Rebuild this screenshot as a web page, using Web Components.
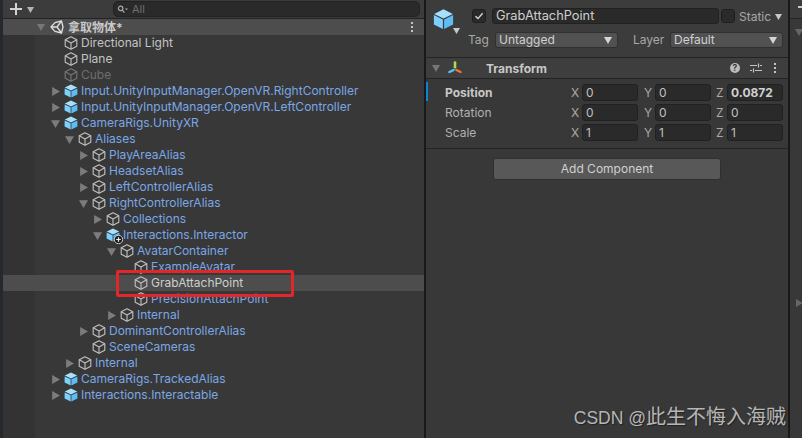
<!DOCTYPE html>
<html>
<head>
<meta charset="utf-8">
<style>
  html, body { margin: 0; height: 100%; background: #383838; overflow: hidden; }
</style>
</head>
<body>
<unity-editor>
  <hierarchy-panel slot="left">
    <scene-row>拿取物体*</scene-row>
    <tree-row depth="0" icon="go">Directional Light</tree-row>
    <tree-row depth="0" icon="go">Plane</tree-row>
    <tree-row depth="0" icon="go" tone="off">Cube</tree-row>
    <tree-row depth="0" icon="prefab" arrow="right" tone="link">Input.UnityInputManager.OpenVR.RightController</tree-row>
    <tree-row depth="0" icon="prefab" arrow="right" tone="link">Input.UnityInputManager.OpenVR.LeftController</tree-row>
    <tree-row depth="0" icon="prefab" arrow="down" tone="link">CameraRigs.UnityXR</tree-row>
    <tree-row depth="1" icon="go" arrow="down" tone="link">Aliases</tree-row>
    <tree-row depth="2" icon="go" arrow="right" tone="link">PlayAreaAlias</tree-row>
    <tree-row depth="2" icon="go" arrow="right" tone="link">HeadsetAlias</tree-row>
    <tree-row depth="2" icon="go" arrow="right" tone="link">LeftControllerAlias</tree-row>
    <tree-row depth="2" icon="go" arrow="down" tone="link">RightControllerAlias</tree-row>
    <tree-row depth="3" icon="go" arrow="right" tone="link">Collections</tree-row>
    <tree-row depth="3" icon="prefab-add" arrow="down" tone="link">Interactions.Interactor</tree-row>
    <tree-row depth="4" icon="go" arrow="down" tone="link">AvatarContainer</tree-row>
    <tree-row depth="5" icon="go" tone="link">ExampleAvatar</tree-row>
    <tree-row depth="5" icon="go" selected>GrabAttachPoint</tree-row>
    <tree-row depth="5" icon="go" tone="link">PrecisionAttachPoint</tree-row>
    <tree-row depth="4" icon="go" arrow="right" tone="link">Internal</tree-row>
    <tree-row depth="2" icon="go" arrow="right" tone="link">DominantControllerAlias</tree-row>
    <tree-row depth="2" icon="go" tone="link">SceneCameras</tree-row>
    <tree-row depth="1" icon="go" arrow="right" tone="link">Internal</tree-row>
    <tree-row depth="0" icon="prefab" arrow="right" tone="link">CameraRigs.TrackedAlias</tree-row>
    <tree-row depth="0" icon="prefab" arrow="right" tone="link">Interactions.Interactable</tree-row>
  </hierarchy-panel>
  <inspector-panel slot="right"></inspector-panel>
</unity-editor>

<script>
const FONT = '"Inter", "Noto Sans CJK SC", sans-serif';

const CUBE = `<path d="M7 .5 13.2 3.6 7 6.6 .8 3.6Z" fill="#a5e0fd"/><path d="M.6 4.4 6.6 7.3V13.6L.6 10.6Z" fill="#7cd0fd"/><path d="M13.4 4.4 7.4 7.3V13.6L13.4 10.6Z" fill="#5fbcf2"/>`;

const ICONS = {
  go: `<svg width="14" height="14" viewBox="0 0 14 14" fill="none" stroke="#c2c2c2" stroke-width="1.1" stroke-linejoin="round"><path d="M7 .8 12.8 3.8V10.2L7 13.2 1.2 10.2V3.8Z"/><path d="M1.2 3.8 7 6.9 12.8 3.8M7 6.9V13.2"/></svg>`,
  prefab: `<svg width="14" height="14" viewBox="0 0 14 14">${CUBE}</svg>`,
  logo: `<svg width="14" height="14" viewBox="0 0 14 14" fill="none" stroke="#e0e0e0" stroke-width="1.3" stroke-linejoin="round"><path d="M1 7 5 2.6 11.5 1 13 7 11.5 13 5 11.4Z"/><path d="M1 7H7L11.5 1M7 7 11.5 13"/></svg>`
};

const tri = (dir, color, size) => {
  const d = dir === 'down' ? 'M0 1H8L4 8Z' : 'M1 0V8L8 4Z';
  return `<svg style="display:block" width="${size}" height="${size}" viewBox="0 0 8 8"><path d="${d}" fill="${color}"/></svg>`;
};

class UnityEditor extends HTMLElement {
  connectedCallback() {
    this.attachShadow({ mode: 'open' }).innerHTML = `
      <style>
        :host { display: flex; width: 802px; height: 438px; position: relative; font-family: ${FONT}; font-size: 12px; background: #383838; }
        .left { width: 424px; flex: none; }
        .right { flex: 1; display: flex; min-width: 0; }
        .split { width: 2px; flex: none; background: #191919; }
      </style>
      <div class="left"><slot name="left"></slot></div>
      <div class="split"></div>
      <div class="right"><slot name="right"></slot></div>`;
  }
}

class HierarchyPanel extends HTMLElement {
  connectedCallback() {
    this.attachShadow({ mode: 'open' }).innerHTML = `
      <style>
        :host { display: flex; flex-direction: column; height: 438px; box-sizing: border-box; position: relative; background: #383838; border-left: 3px solid #25282d; }
        .bar { height: 19px; box-sizing: border-box; flex: none; display: flex; align-items: center; background: #3c3c3c; border-bottom: 1px solid #232323; padding-left: 7px; gap: 5px; }
        .plus { width: 12px; height: 12px; flex: none; }
        .search { margin-left: 74px; width: 307px; height: 16px; box-sizing: border-box; background: #2a2a2a; border: 1px solid #222; border-radius: 5px; display: flex; align-items: center; gap: 4px; padding-left: 3px; color: #6f6f6f; font-size: 11px; }
        .tree { flex: 1; background: linear-gradient(90deg, #333 0, #333 32px, #383838 32px); }
        .mark { position: absolute; left: 113px; top: 270px; width: 178px; height: 27px; box-sizing: border-box; border: 3px solid #e3262a; border-radius: 2px; }
      </style>
      <div class="bar">
        <svg class="plus" viewBox="0 0 12 12"><path d="M5 0H7V5H12V7H7V12H5V7H0V5H5Z" fill="#d2d2d2"/></svg>
        ${tri('down', '#b4b4b4', 7)}
        <div class="search">
          <svg width="11" height="9" viewBox="0 0 11 9" fill="none" stroke="#a8a8a8" stroke-width="1.2"><circle cx="3.6" cy="3.4" r="2.2"/><path d="M5.4 5.2 7.4 7.6"/><path d="M8 3.4H11L9.5 5.2Z" fill="#a8a8a8" stroke="none"/></svg>
          <span>All</span>
        </div>
      </div>
      <div class="tree"><slot></slot></div>
      <div class="mark"></div>`;
  }
}

class SceneRow extends HTMLElement {
  connectedCallback() {
    this.attachShadow({ mode: 'open' }).innerHTML = `
      <style>
        :host { display: flex; align-items: center; height: 16px; background: #4d4d4d; color: #c8c8c8; font-weight: 700; padding-left: 34px; box-sizing: border-box; }
        .arrow { width: 8px; height: 8px; flex: none; margin-right: 5px; display: flex; }
        .logo { width: 14px; height: 14px; flex: none; margin-right: 4px; display: flex; }
        .text { flex: 1; padding-bottom: 2px; }
        .dots { width: 3px; margin-right: 10px; display: flex; flex-direction: column; gap: 2px; }
        .dots i { width: 2px; height: 2px; background: #c4c4c4; display: block; }
      </style>
      <span class="arrow">${tri('down', '#777', 8)}</span>
      <span class="logo">${ICONS.logo}</span>
      <span class="text"><slot></slot></span>
      <span class="dots"><i></i><i></i><i></i></span>`;
  }
}

class TreeRow extends HTMLElement {
  connectedCallback() {
    const depth = Number(this.getAttribute('depth') || 0);
    const arrow = this.getAttribute('arrow');
    const icon = this.getAttribute('icon');
    const add = icon === 'prefab-add' ? `<svg class="badge" width="9" height="9" viewBox="0 0 9 9"><circle cx="4.5" cy="4.5" r="4.2" fill="#1c1c1c" stroke="#d8d8d8" stroke-width=".9"/><path d="M4.5 2.2V6.8M2.2 4.5H6.8" stroke="#eee" stroke-width="1.2"/></svg>` : '';
    this.style.paddingLeft = (48 + depth * 14) + 'px';
    this.attachShadow({ mode: 'open' }).innerHTML = `
      <style>
        :host { display: flex; align-items: center; height: 16px; box-sizing: border-box; color: #c4c4c4; white-space: nowrap; }
        :host([tone=link]) { color: #7ba7e6; }
        :host([tone=off]) { color: #6e6e6e; }
        :host([selected]) { background: #4d4d4d; color: #cdcdcd; }
        .arrow { width: 9px; height: 9px; flex: none; margin-right: 4px; display: flex; }
        .icon { width: 14px; height: 14px; flex: none; margin-right: 3px; display: flex; position: relative; }
        :host([tone=off]) .icon { opacity: .45; }
        .badge { position: absolute; right: -3px; bottom: -2px; }
        .text { padding-bottom: 2px; }
      </style>
      <span class="arrow">${arrow ? tri(arrow, '#7c7c7c', 9) : ''}</span>
      <span class="icon">${ICONS[icon === 'prefab-add' ? 'prefab' : icon]}${add}</span>
      <span class="text"><slot></slot></span>`;
  }
}

class UnityDropdown extends HTMLElement {
  connectedCallback() {
    this.attachShadow({ mode: 'open' }).innerHTML = `
      <style>
        :host { display: flex; align-items: center; justify-content: space-between; box-sizing: border-box; height: 16px; background: #515151; border: 1px solid #303030; border-radius: 3px; padding: 0 5px 1px 3px; color: #d0d0d0; }
      </style>
      <slot></slot>${tri('down', '#d4d4d4', 8)}`;
  }
}

class VectorRow extends HTMLElement {
  connectedCallback() {
    const vals = (this.getAttribute('values') || '').split(',');
    const cells = ['X', 'Y', 'Z'].map((axis, i) => `
      <span class="axis">${axis}</span>
      <span class="field ${i === 2 && this.hasAttribute('active') ? 'on' : ''}">${vals[i]}</span>`).join('');
    this.attachShadow({ mode: 'open' }).innerHTML = `
      <style>
        :host { display: flex; align-items: center; height: 20px; color: #b0b0b0; position: relative; }
        :host([active]) { color: #c8c8c8; }
        :host([active]) .label { font-weight: 700; }
        :host([active])::before { content: ""; position: absolute; left: 0; top: 0; width: 2px; height: 19px; background: #0a84d6; }
        .label { width: 145px; flex: none; padding-left: 19px; box-sizing: border-box; }
        .grid { display: grid; grid-template-columns: 11px 62px 11px 61px 11px 56px; align-items: center; }
        .axis { color: #a8a8a8; }
        .field { width: 56px; height: 17px; box-sizing: border-box; background: #2a2a2a; border: 1px solid #212121; border-radius: 3px; padding-left: 3px; line-height: 15px; color: #c0c0c0; }
        .on { font-weight: 700; color: #d0d0d0; }
      </style>
      <span class="label"><slot></slot></span>
      <span class="grid">${cells}</span>`;
  }
}

class InspectorPanel extends HTMLElement {
  connectedCallback() {
    this.attachShadow({ mode: 'open' }).innerHTML = `
      <style>
        :host { display: flex; flex: 1; height: 438px; background: #383838; position: relative; color: #c4c4c4; }
        .main { width: 362px; flex: none; background: #383838; }
        .head { height: 58px; box-sizing: border-box; background: #3c3c3c; border-bottom: 1px solid #232323; padding: 8px 6px 0 7px; display: flex; }
        .cube { width: 32px; flex: none; position: relative; }
        .cube svg { display: block; }
        .cube .drop { position: absolute; left: 20px; top: 19px; }
        .rows { flex: 1; display: flex; flex-direction: column; gap: 8px; padding-left: 3px; }
        .r1, .r2 { display: flex; align-items: center; height: 16px; }
        .r1 { padding-left: 4px; }
        .check { width: 14px; height: 14px; box-sizing: border-box; background: #2a2a2a; border: 1px solid #1f1f1f; border-radius: 3px; display: flex; align-items: center; justify-content: center; flex: none; }
        .name { width: 227px; height: 16px; box-sizing: border-box; margin: 0 2px 0 6px; background: #2a2a2a; border: 1px solid #212121; border-radius: 3px; padding-left: 3px; line-height: 13px; font-size: 12.8px; color: #cfcfcf; flex: none; }
        .static { margin-left: 4px; color: #a8a8a8; }
        .tag { width: 27px; color: #a8a8a8; flex: none; }
        .r2 span { padding-bottom: 1px; }
        .r2 unity-dropdown { flex: none; }
        .layer { width: 37px; margin-left: 15px; color: #a8a8a8; flex: none; }
        .comp { height: 21px; box-sizing: border-box; background: #3e3e3e; border-bottom: 1px solid #232323; display: flex; align-items: center; padding: 0 12px 0 6px; color: #c8c8c8; font-weight: 700; }
        .comp .title { margin-left: 24px; flex: 1; }
        .comp svg { flex: none; }
        .vecs { padding: 3px 0 6px; border-bottom: 1px solid #232323; }
        .foot { display: flex; padding-top: 9px; justify-content: center; }
        .btn { width: 228px; height: 22px; box-sizing: border-box; background: #585858; border: 1px solid #2f2f2f; border-radius: 3px; text-align: center; line-height: 20px; color: #d0d0d0; }
        .side { flex: 1; border-left: 2px solid #191919; display: flex; flex-direction: column; }
        .side .top { height: 19px; box-sizing: border-box; border-bottom: 1px solid #232323; background: #3c3c3c; display: flex; justify-content: flex-end; align-items: center; padding-bottom: 5px; }
        .side .top i { display: block; width: 5px; height: 2px; background: #c8c8c8; }
        .side .tri { padding: 9px 0 0 5px; display: flex; }
        .side .tri2 { padding: 263px 0 0 5px; display: flex; }
        .mark { position: absolute; right: 17px; bottom: 8px; display: flex; align-items: baseline; color: #b6b6b6; text-shadow: 1px 1px 1px #222; font-family: "Liberation Sans", "Noto Sans CJK SC", sans-serif; font-size: 20px; line-height: 24px; white-space: nowrap; }
        .mark span { font-size: 17.5px; }
      </style>
      <div class="main">
        <div class="head">
          <div class="cube">
            <svg width="21" height="22" viewBox="0 0 14 14">${CUBE}</svg>
            <span class="drop">${tri('down', '#c8c8c8', 7)}</span>
          </div>
          <div class="rows">
            <div class="r1">
              <span class="check"><svg width="10" height="10" viewBox="0 0 10 10" fill="none" stroke="#d8d8d8" stroke-width="1.4"><path d="M1.5 5.2 4 7.6 8.6 2.2"/></svg></span>
              <span class="name">GrabAttachPoint</span>
              <span class="check"></span>
              <span class="static">Static</span>
              <span style="margin-left:4px;display:flex">${tri('down', '#c8c8c8', 7)}</span>
            </div>
            <div class="r2">
              <span class="tag">Tag</span>
              <unity-dropdown style="width:123px">Untagged</unity-dropdown>
              <span class="layer">Layer</span>
              <unity-dropdown style="width:113px">Default</unity-dropdown>
            </div>
          </div>
        </div>
        <div class="comp">
          ${tri('down', '#777', 8)}
          <svg style="margin-left:8px" width="14" height="14" viewBox="0 0 14 14" fill="none" stroke-linecap="round"><path d="M7 1.6V6.2" stroke="#a8e04a" stroke-width="2.6"/><path d="M1.4 11 5.6 9" stroke="#5cc0f4" stroke-width="2.4"/><path d="M8.4 9 12.6 11" stroke="#f5703c" stroke-width="2.4"/></svg>
          <span class="title">Transform</span>
          <svg width="12" height="12" viewBox="0 0 12 12"><circle cx="6" cy="6" r="5" fill="#bdbdbd"/><text x="6" y="9" font-size="8.5" font-weight="700" text-anchor="middle" fill="#3c3c3c" font-family="Inter">?</text></svg>
          <svg style="margin-left:9px" width="12" height="12" viewBox="0 0 12 12" stroke="#c4c4c4" stroke-width="1.2" fill="none"><path d="M0 3.5H7M10 3.5H12M8.5 1.5V5.5M0 8.5H2M5 8.5H12M3.5 6.5V10.5"/></svg>
          <svg style="margin-left:12px" width="2" height="12" viewBox="0 0 2 12" fill="#c4c4c4"><rect y="1" width="2" height="2"/><rect y="5" width="2" height="2"/><rect y="9" width="2" height="2"/></svg>
        </div>
        <div class="vecs">
          <vector-row active values="0,0,0.0872">Position</vector-row>
          <vector-row values="0,0,0">Rotation</vector-row>
          <vector-row values="1,1,1">Scale</vector-row>
        </div>
        <div class="foot"><div class="btn">Add Component</div></div>
      </div>
      <div class="side">
        <div class="top"><i></i></div>
        <div class="tri">${tri('down', '#666', 8)}</div>
        <div class="tri2">${tri('right', '#666', 8)}</div>
      </div>
      <div class="mark"><span>CSDN @</span>此生不悔入海贼</div>`;
  }
}

customElements.define('unity-editor', UnityEditor);
customElements.define('hierarchy-panel', HierarchyPanel);
customElements.define('scene-row', SceneRow);
customElements.define('tree-row', TreeRow);
customElements.define('unity-dropdown', UnityDropdown);
customElements.define('vector-row', VectorRow);
customElements.define('inspector-panel', InspectorPanel);
</script>
</body>
</html>
